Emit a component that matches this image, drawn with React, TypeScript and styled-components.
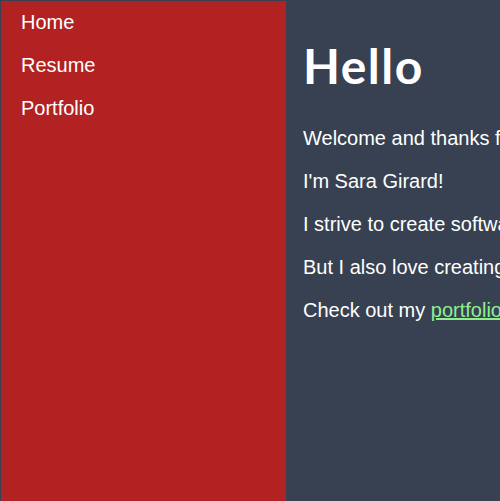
import React from 'react';
import styled, { createGlobalStyle } from 'styled-components';

const GlobalStyle = createGlobalStyle`
  html, body {
    margin: 0;
    padding: 0;
    background: #374151;
  }
  body {
    font-family: 'Liberation Sans', Arial, sans-serif;
  }
`;

const Page = styled.div`
  display: flex;
  padding: 1px 0 0 1px;
  box-sizing: border-box;
  height: 501px;
  overflow: hidden;
`;

const Sidebar = styled.nav`
  width: 285px;
  flex-shrink: 0;
  background: #b22222;
  display: flex;
  flex-direction: column;
  gap: 20px;
  padding: 10px 20px;
  box-sizing: border-box;
`;

const NavLink = styled.a`
  color: #ffffff;
  font-size: 20px;
  line-height: 23px;
  text-decoration: none;
`;

const Main = styled.main`
  flex: 1;
  padding: 4px 0 0 17px;
  color: #ffffff;
  white-space: nowrap;
  overflow: hidden;
`;

const Heading = styled.h1`
  font-family: Lato, 'Open Sans', sans-serif;
  font-weight: 700;
  font-size: 48px;
  line-height: 58px;
  letter-spacing: 1.5px;
  margin: 32px 0;
`;

const Text = styled.p`
  font-size: 20px;
  line-height: 23px;
  margin: 20px 0;
`;

const Link = styled.a`
  color: #90ee90;
  text-decoration: underline;
`;

const App: React.FC = () => {
  return (
    <>
      <GlobalStyle />
      <Page>
        <Sidebar>
          <NavLink href="#">Home</NavLink>
          <NavLink href="#">Resume</NavLink>
          <NavLink href="#">Portfolio</NavLink>
        </Sidebar>
        <Main>
          <Heading>Hello</Heading>
          <Text>Welcome and thanks for visiting my site!</Text>
          <Text>I'm Sara Girard!</Text>
          <Text>I strive to create software that is clean and accessible.</Text>
          <Text>But I also love creating art and music.</Text>
          <Text>
            Check out my <Link href="#">portfolio</Link> to see more.
          </Text>
        </Main>
      </Page>
    </>
  );
};

export default App;
